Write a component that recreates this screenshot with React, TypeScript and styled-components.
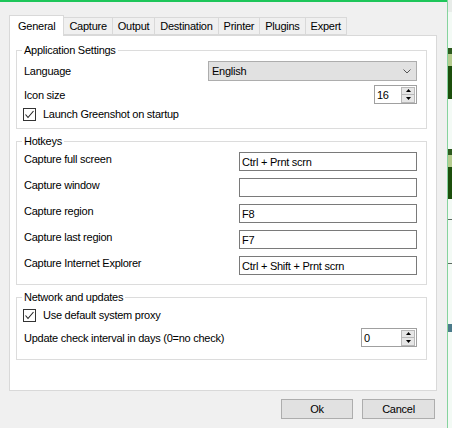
import React, { FC } from "react";
import styled, { createGlobalStyle } from "styled-components";

const GlobalStyle = createGlobalStyle`
  html, body {
    margin: 0;
    padding: 0;
    background: #f0f0f0;
  }
  body {
    font-family: "Liberation Sans", Arial, sans-serif;
    font-size: 11px;
    letter-spacing: -0.25px;
    color: #000;
  }
`;

const Screen = styled.div`
  width: 452px;
  height: 428px;
  overflow: hidden;
  display: flex;
  flex-direction: column;
  background: #f0f0f0;
`;

const TopAccent = styled.div`
  height: 2px;
  width: 448px;
  background: #1ec65a;
  flex: none;
`;

const Body = styled.div`
  flex: 1;
  display: flex;
`;

const Dialog = styled.div`
  width: 448px;
  padding: 13px 0 0 9px;
  box-sizing: border-box;
`;

const TabStrip = styled.div`
  display: flex;
  align-items: flex-end;
  height: 20px;
  position: relative;
  z-index: 1;
`;

const Tab = styled.div<{ $active?: boolean }>`
  box-sizing: border-box;
  height: ${(p) => (p.$active ? "21px" : "18px")};
  margin-bottom: ${(p) => (p.$active ? "-1px" : "0")};
  padding: 0 ${(p) => (p.$active ? "8px" : "5px")};
  margin-left: ${(p) => (p.$active ? "0" : "-1px")};
  border: 1px solid #d9d9d9;
  border-bottom: ${(p) => (p.$active ? "none" : "1px solid #d9d9d9")};
  background: ${(p) => (p.$active ? "#fff" : "#f0f0f0")};
  display: flex;
  align-items: ${(p) => (p.$active ? "flex-start" : "center")};
  padding-top: ${(p) => (p.$active ? "3px" : "0")};
  line-height: 14px;
  white-space: nowrap;
  &:first-child {
    margin-left: 0;
  }
`;

const TabPanel = styled.div`
  width: 428px;
  height: 356px;
  box-sizing: border-box;
  border: 1px solid #d9d9d9;
  background: #fff;
  padding: 7px 9px 0 6px;
`;

const Group = styled.fieldset<{ $pb: number; $mt?: number }>`
  margin: ${(p) => p.$mt ?? 0}px 0 0 0;
  padding: 0 9px ${(p) => p.$pb}px 7px;
  border: 1px solid #dcdcdc;
  min-inline-size: 0;
`;

const Legend = styled.legend`
  padding: 0 2px;
  margin-left: -2px;
  line-height: 14px;
`;

const Row = styled.div<{ $h: number; $mt: number; $top?: boolean }>`
  height: ${(p) => p.$h}px;
  margin-top: ${(p) => p.$mt}px;
  display: flex;
  align-items: ${(p) => (p.$top ? "flex-start" : "center")};
  justify-content: space-between;
`;

const Label = styled.span`
  line-height: 14px;
  white-space: nowrap;
`;

const Combo = styled.div`
  width: 209px;
  height: 20px;
  box-sizing: border-box;
  border: 1px solid #adadad;
  background: #e1e1e1;
  display: flex;
  align-items: center;
  justify-content: space-between;
  padding: 0 5px 0 3px;
`;

const TextField = styled.div`
  width: 178px;
  height: 19px;
  box-sizing: border-box;
  border: 1px solid #7a7a7a;
  background: #fff;
  padding: 0 2px;
  display: flex;
  align-items: center;
`;

const Numeric = styled.div<{ $w: number }>`
  width: ${(p) => p.$w}px;
  height: 19px;
  box-sizing: border-box;
  border: 1px solid #a0a0a0;
  background: #fff;
  display: flex;
  align-items: center;
  padding-left: 2px;
  padding-right: 1px;
`;

const NumericValue = styled.span`
  flex: 1;
`;

const Spin = styled.div`
  width: 14px;
  height: 16px;
  display: flex;
  flex-direction: column;
  gap: 0;
`;

const SpinButton = styled.div`
  flex: 1;
  box-sizing: border-box;
  border: 1px solid #b8b8b8;
  background: #e6e6e6;
  display: flex;
  align-items: center;
  justify-content: center;
  & + & {
    border-top: none;
  }
`;

const CheckRow = styled.div<{ $mt: number }>`
  display: flex;
  align-items: center;
  gap: 7px;
  margin-top: ${(p) => p.$mt}px;
  margin-left: -1px;
  height: 14px;
`;

const CheckBox = styled.span`
  width: 13px;
  height: 13px;
  box-sizing: border-box;
  border: 1px solid #333;
  background: #fff;
  display: flex;
  align-items: center;
  justify-content: center;
`;

const ButtonRow = styled.div`
  width: 428px;
  margin-top: 8px;
  display: flex;
  justify-content: flex-end;
  gap: 9px;
  padding-right: 2px;
  box-sizing: border-box;
`;

const Button = styled.div<{ $w: number }>`
  width: ${(p) => p.$w}px;
  height: 20px;
  box-sizing: border-box;
  border: 1px solid #adadad;
  background: #e1e1e1;
  display: flex;
  align-items: center;
  justify-content: center;
`;

const Backdrop = styled.div`
  width: 4px;
  flex: none;
  border-left: 1px solid #86d39e;
  background: #f3faf5;
  display: flex;
  flex-direction: column;
  margin-top: -2px;
`;

const Strip = styled.div<{ $h: number; $c: string }>`
  height: ${(p) => p.$h}px;
  background: ${(p) => p.$c};
  flex: none;
`;

const Chevron = () => (
  <svg width="8" height="5" viewBox="0 0 8 5">
    <polyline points="0.5,0.5 4,4 7.5,0.5" fill="none" stroke="#555" strokeWidth="1" />
  </svg>
);

const Tick = () => (
  <svg width="11" height="11" viewBox="0 0 11 11">
    <polyline points="1.5,5.5 4,8.5 9.5,2" fill="none" stroke="#222" strokeWidth="1.1" />
  </svg>
);

const Arrow: FC<{ up?: boolean }> = ({ up }) => (
  <svg width="5" height="3" viewBox="0 0 5 3">
    <polygon points={up ? "0,3 2.5,0 5,3" : "0,0 5,0 2.5,3"} fill="#000" />
  </svg>
);

const Spinner: FC<{ value: string; width: number }> = ({ value, width }) => (
  <Numeric $w={width}>
    <NumericValue>{value}</NumericValue>
    <Spin>
      <SpinButton>
        <Arrow up />
      </SpinButton>
      <SpinButton>
        <Arrow />
      </SpinButton>
    </Spin>
  </Numeric>
);

const Check: FC<{ label: string; mt: number }> = ({ label, mt }) => (
  <CheckRow $mt={mt}>
    <CheckBox>
      <Tick />
    </CheckBox>
    <Label>{label}</Label>
  </CheckRow>
);

const tabs = ["General", "Capture", "Output", "Destination", "Printer", "Plugins", "Expert"];

const hotkeys = [
  { label: "Capture full screen", value: "Ctrl + Prnt scrn" },
  { label: "Capture window", value: "" },
  { label: "Capture region", value: "F8" },
  { label: "Capture last region", value: "F7" },
  { label: "Capture Internet Explorer", value: "Ctrl + Shift + Prnt scrn" },
];

export default function App() {
  return (
    <Screen>
      <GlobalStyle />
      <TopAccent />
      <Body>
        <Dialog>
          <TabStrip>
            {tabs.map((t, i) => (
              <Tab key={t} $active={i === 0}>
                {t}
              </Tab>
            ))}
          </TabStrip>
          <TabPanel>
            <Group $pb={7}>
              <Legend>Application Settings</Legend>
              <Row $h={20} $mt={4}>
                <Label>Language</Label>
                <Combo>
                  <span>English</span>
                  <Chevron />
                </Combo>
              </Row>
              <Row $h={19} $mt={4}>
                <Label>Icon size</Label>
                <Spinner value="16" width={43} />
              </Row>
              <Check label="Launch Greenshot on startup" mt={3} />
            </Group>
            <Group $pb={9} $mt={5}>
              <Legend>Hotkeys</Legend>
              {hotkeys.map((h, i) => (
                <Row key={h.label} $h={19} $mt={i === 0 ? 4 : 7} $top>
                  <Label>{h.label}</Label>
                  <TextField>{h.value}</TextField>
                </Row>
              ))}
            </Group>
            <Group $pb={12} $mt={5}>
              <Legend>Network and updates</Legend>
              <Check label="Use default system proxy" mt={4} />
              <Row $h={19} $mt={6}>
                <Label>Update check interval in days (0=no check)</Label>
                <Spinner value="0" width={56} />
              </Row>
            </Group>
          </TabPanel>
          <ButtonRow>
            <Button $w={72}>Ok</Button>
            <Button $w={73}>Cancel</Button>
          </ButtonRow>
        </Dialog>
        <Backdrop>
          <Strip $h={12} $c="#e8ece9" />
          <Strip $h={36} $c="#f3faf5" />
          <Strip $h={6} $c="#2d5a1e" />
          <Strip $h={12} $c="#b5cc8f" />
          <Strip $h={33} $c="#1c4f0c" />
          <Strip $h={50} $c="#f3faf5" />
          <Strip $h={6} $c="#2d5a1e" />
          <Strip $h={12} $c="#b5cc8f" />
          <Strip $h={32} $c="#1c4f0c" />
          <Strip $h={20} $c="#f3faf5" />
          <Strip $h={1} $c="#5a6a60" />
          <Strip $h={43} $c="#f3faf5" />
          <Strip $h={1} $c="#5a6a60" />
          <Strip $h={60} $c="#f3faf5" />
          <Strip $h={8} $c="#4a7a8a" />
        </Backdrop>
      </Body>
    </Screen>
  );
}
